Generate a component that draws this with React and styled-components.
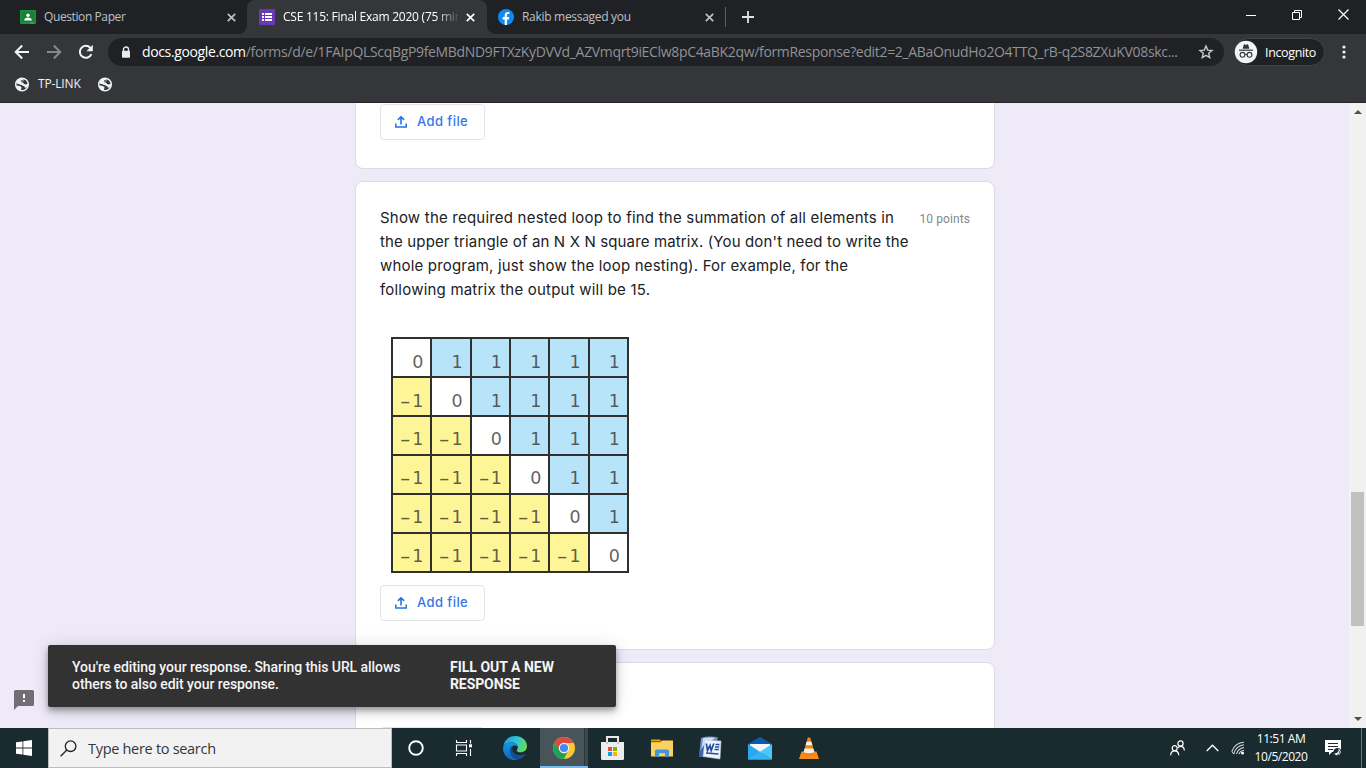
import React from "react";
import styled, { createGlobalStyle, css } from "styled-components";

const Global = createGlobalStyle`
  * { box-sizing: border-box; }
  html, body { margin: 0; padding: 0; overflow: hidden; }
  svg { display: block; flex: none; }
`;

const uiFont = `"Open Sans", "Noto Sans", sans-serif`;

const Screen = styled.div`
  width: 1366px;
  height: 768px;
  display: flex;
  flex-direction: column;
  overflow: hidden;
  font-family: ${uiFont};
`;

const Label = styled.span`
  white-space: nowrap;
  letter-spacing: ${(p) => p.$track || 0}px;
`;

/* ---------- browser chrome ---------- */

const TabStrip = styled.div`
  height: 34px;
  flex: none;
  display: flex;
  background: #202124;
`;

const Tab = styled.div`
  position: relative;
  width: ${(p) => p.$width}px;
  height: 34px;
  padding: 0 ${(p) => p.$end || 11}px 0 ${(p) => p.$inset}px;
  display: flex;
  align-items: center;
  gap: 8px;
  font-size: 12px;
  color: ${(p) => (p.$active ? "#ffffff" : "#bdc1c6")};
  ${(p) =>
    p.$active &&
    css`
      background: #35363a;
      border-radius: 8px 8px 0 0;
      &::before,
      &::after {
        content: "";
        position: absolute;
        bottom: 0;
        width: 8px;
        height: 8px;
      }
      &::before {
        left: -8px;
        background: radial-gradient(circle at 0 0, transparent 7.5px, #35363a 8px);
      }
      &::after {
        right: -8px;
        background: radial-gradient(circle at 100% 0, transparent 7.5px, #35363a 8px);
      }
    `}
`;

const TabTitle = styled.div`
  flex: 1;
  min-width: 0;
  white-space: nowrap;
  line-height: 20px;
  ${(p) => p.$fade && css`mask-image: linear-gradient(90deg, #000 87%, rgba(0, 0, 0, 0.1) 100%);`}
`;

const NewTab = styled.div`
  width: 44px;
  display: flex;
  align-items: center;
  padding-left: 16px;
  position: relative;
  &::before {
    content: "";
    position: absolute;
    left: -1px;
    top: 7px;
    width: 1px;
    height: 20px;
    background: #5a5c60;
  }
`;

const WindowControls = styled.div`
  margin-left: auto;
  display: flex;
  height: 29px;
`;

const WindowButton = styled.div`
  width: 46px;
  display: flex;
  align-items: center;
  justify-content: center;
`;

const Toolbar = styled.div`
  height: 36px;
  flex: none;
  display: flex;
  align-items: center;
  background: #35363a;
`;

const NavButtons = styled.div`
  width: 108px;
  padding-left: 14px;
  display: flex;
  gap: 16px;
`;

const Omnibox = styled.div`
  width: 1116px;
  height: 28px;
  border-radius: 14px;
  background: #202124;
  display: flex;
  align-items: center;
  padding: 0 10px 0 13px;
`;

const Url = styled.div`
  flex: 1;
  margin-left: 11px;
  font-size: 14px;
  line-height: 20px;
  color: #8f9297;
  white-space: nowrap;
`;

const Host = styled.span`
  color: #ffffff;
  letter-spacing: ${(p) => p.$track}px;
`;

const IncognitoChip = styled.div`
  margin: 0 2px 0 10px;
  width: 91px;
  height: 28px;
  border: 1px solid #414347;
  border-radius: 14px;
  background: #202124;
  display: flex;
  align-items: center;
  gap: 7px;
  font-size: 12.5px;
  color: #fff;
  svg {
    margin-left: -1px;
  }
`;

const MenuDots = styled.div`
  flex: 1;
  display: flex;
  justify-content: center;
  padding-right: 5px;
`;

const Bookmarks = styled.div`
  height: 33px;
  flex: none;
  padding: 0 0 4px 14px;
  display: flex;
  align-items: center;
  background: #35363a;
  border-bottom: 1px solid #242528;
  font-size: 12px;
  color: #f1f3f4;
`;

const BookmarkText = styled.div`
  width: 51px;
  margin: 0 8px 1px 8px;
`;

/* ---------- form page ---------- */

const Viewport = styled.div`
  position: relative;
  height: 625px;
  flex: none;
  display: flex;
  overflow: hidden;
  background: #eeeaf8;
`;

const FormColumn = styled.div`
  width: 1349px;
  height: 625px;
  display: flex;
  flex-direction: column;
  align-items: center;
  gap: 12px;
  padding-left: 1px;
`;

const Card = styled.div`
  width: 640px;
  flex: none;
  height: ${(p) => p.$height}px;
  padding: ${(p) => p.$top}px 24px 0;
  background: #fff;
  border: 1px solid #dadce0;
  ${(p) => p.$cut && css`border-top: 0;`}
  border-radius: ${(p) => (p.$cut ? "0 0 8px 8px" : "8px")};
`;

const AddFileButton = styled.div`
  width: 105px;
  height: 36px;
  border: 1px solid #e2e4e8;
  border-radius: 4px;
  display: flex;
  align-items: center;
  padding: 0 0 2px 14px;
  gap: 10px;
  font: 500 13px/20px Inter, "Open Sans", sans-serif;
  color: #3677e8;
`;

const QuestionHeader = styled.div`
  display: flex;
  justify-content: space-between;
`;

const QuestionText = styled.div`
  font: 400 15px/24px Inter, Lato, sans-serif;
  color: #202124;
`;

const QuestionLine = styled.div`
  white-space: nowrap;
  letter-spacing: ${(p) => p.$track}px;
`;

const Points = styled.div`
  font: 400 12px/16px Roboto, sans-serif;
  letter-spacing: 0.1px;
  color: #84888d;
  padding-top: 5px;
  white-space: nowrap;
`;

const Matrix = styled.div`
  width: 238px;
  height: 236px;
  margin: 35px 0 12px 11px;
  padding: 2px;
  display: grid;
  grid-template: repeat(6, 1fr) / repeat(6, 1fr);
  gap: 2px;
  background: #30302f;
`;

const cellColors = { 0: "#ffffff", 1: "#b8e4f9", "-1": "#fef597" };

const Cell = styled.div`
  background: ${(p) => cellColors[p.$value]};
  display: flex;
  align-items: center;
  justify-content: flex-end;
  gap: 4px;
  padding: ${(p) => 9 - p.$row * 0.6}px 7px 0 0;
  min-width: 0;
  font: 400 17.5px/20px "DejaVu Sans", sans-serif;
  color: rgba(45, 45, 45, 0.76);
`;

const Minus = styled.span`
  display: inline-block;
  transform: scaleX(1.75);
`;

const Toast = styled.div`
  position: absolute;
  left: 48px;
  top: 542px;
  width: 568px;
  height: 62px;
  border-radius: 2px;
  background: #323232;
  box-shadow: 0 6px 10px rgba(0, 0, 0, 0.14), 0 1px 18px rgba(0, 0, 0, 0.12), 0 3px 5px rgba(0, 0, 0, 0.25);
  display: flex;
  padding: 14px 24px 0;
  font: 500 14px/17px Roboto, sans-serif;
  color: #f4f4f4;
`;

const ToastMessage = styled.div`
  width: 378px;
`;

const ToastAction = styled.div`
  font-weight: 700;
`;

const Feedback = styled.div`
  position: absolute;
  left: 14px;
  top: 587px;
`;

const Scrollbar = styled.div`
  width: 17px;
  background: #f1f1f1;
  display: flex;
  flex-direction: column;
  align-items: center;
  justify-content: space-between;
  padding: 7px 0 7px;
`;

const Thumb = styled.div`
  width: 13px;
  height: 134px;
  margin-top: 286px;
  background: #c1c1c1;
`;

/* ---------- taskbar ---------- */

const Taskbar = styled.div`
  height: 40px;
  flex: none;
  display: flex;
  background: #1a2b30;
`;

const TaskButton = styled.div`
  width: ${(p) => p.$width || 49}px;
  margin-left: ${(p) => p.$gap || 0}px;
  display: flex;
  align-items: center;
  justify-content: center;
`;

const RunningButton = styled(TaskButton)`
  width: 48px;
  background: linear-gradient(90deg, #47555a 0 44px, #28383d 44px 45px, #3c4a4e 45px);
  border-bottom: 2px solid #76b9ed;
  padding-top: 2px;
`;

const SearchBox = styled.div`
  width: 344px;
  height: 40px;
  border: 1px solid #bcbcbc;
  background: #f2f2f2;
  display: flex;
  align-items: center;
  padding-left: 11px;
  gap: 11px;
  font-size: 14.5px;
  color: #33373a;
`;

const Tray = styled.div`
  margin-left: auto;
  display: flex;
  align-items: center;
`;

const TrayItem = styled.div`
  width: ${(p) => p.$width}px;
  margin-right: ${(p) => p.$after || 0}px;
  display: flex;
  justify-content: center;
`;

const Clock = styled.div`
  width: 66px;
  font-size: 12px;
  line-height: 18px;
  text-align: center;
  color: #fff;
`;

const ShowDesktop = styled.div`
  width: 5px;
  height: 40px;
  border-left: 1px solid #68757a;
`;

/* ---------- icons ---------- */

const CloseIcon = ({ color }) => (
  <svg width="9" height="9" viewBox="0 0 9 9">
    <path d="M.8.8l7.4 7.4M8.2.8L.8 8.2" stroke={color} strokeWidth="1.7" />
  </svg>
);

const ClassroomIcon = () => (
  <svg width="16" height="14" viewBox="0 0 16 14">
    <rect width="16" height="14" rx="1" fill="#1e8e3e" />
    <rect x="1.5" y="1.5" width="13" height="11" fill="#188038" />
    <circle cx="8" cy="5.2" r="1.7" fill="#fff" />
    <path d="M4.2 10.4c0-2 1.8-2.8 3.8-2.8s3.8.8 3.8 2.8z" fill="#fff" />
    <path d="M10 12.4h3.5v1H10z" fill="#57bb8a" />
  </svg>
);

const FormsIcon = () => (
  <svg width="16" height="16" viewBox="0 0 16 16">
    <rect width="16" height="16" rx="1" fill="#673ab7" />
    <path d="M3 4h2v2H3zM3 7h2v2H3zM3 10h2v2H3zM6 4h7v2H6zM6 7h7v2H6zM6 10h7v2H6z" fill="#fff" />
  </svg>
);

const FacebookIcon = () => (
  <svg width="16" height="16" viewBox="0 0 16 16">
    <circle cx="8" cy="8" r="8" fill="#0d8bf0" />
    <path d="M6.7 16v-5.6H4.6V8h2.1V6.2c0-2.1 1.2-3.3 3.1-3.3.7 0 1.5.1 1.5.1v2.1h-1.1c-1 0-1.3.6-1.3 1.3V8h2.3l-.4 2.4H8.9V16z" fill="#fff" />
  </svg>
);

const PlusIcon = () => (
  <svg width="12" height="12" viewBox="0 0 12 12">
    <path d="M6 0v12M0 6h12" stroke="#dfe1e5" strokeWidth="1.8" />
  </svg>
);

const BackIcon = ({ color, flip }) => (
  <svg width="16" height="16" viewBox="0 0 16 16">
    <path
      d="M15 8H2M8.2 1.5L1.7 8l6.5 6.5"
      fill="none"
      stroke={color}
      strokeWidth="2"
      transform={flip ? "matrix(-1 0 0 1 16 0)" : undefined}
    />
  </svg>
);

const ReloadIcon = () => (
  <svg width="16" height="16" viewBox="0 0 16 16">
    <path d="M13.4 10.1A6 6 0 1 1 12.3 3.8L13.6 5" fill="none" stroke="#f1f3f4" strokeWidth="2" />
    <path d="M14.8.8v6.4H8.4z" fill="#f1f3f4" />
  </svg>
);

const LockIcon = () => (
  <svg width="10" height="13" viewBox="0 0 10 13">
    <path d="M2.5 5V3.3a2.5 2.3 0 0 1 5 0V5" fill="none" stroke="#e8eaed" strokeWidth="1.4" />
    <rect x="1" y="4.7" width="8" height="7" rx=".8" fill="#e8eaed" />
  </svg>
);

const StarIcon = () => (
  <svg width="16" height="16" viewBox="0 0 16 16">
    <path d="M8 2.1l1.7 4 4.3.4-3.3 2.8 1 4.2L8 11.3l-3.7 2.2 1-4.2L2 6.5l4.3-.4z" fill="none" stroke="#c9ccd0" strokeWidth="1.4" />
  </svg>
);

const IncognitoIcon = () => (
  <svg width="24" height="24" viewBox="0 0 24 24">
    <circle cx="12" cy="12" r="11.2" fill="#f1f3f4" />
    <path d="M8.6 8.8l1.2-4.1c.2-.4.6-.4 1-.2 1 .4 1.5.4 2.4 0 .4-.2.8-.2 1 .2l1.2 4.1z" fill="#35363a" />
    <path d="M5 10.2h14" stroke="#35363a" strokeWidth="1.2" />
    <circle cx="8.5" cy="14.8" r="2.4" fill="none" stroke="#35363a" strokeWidth="1.1" />
    <circle cx="15.5" cy="14.8" r="2.4" fill="none" stroke="#35363a" strokeWidth="1.1" />
    <path d="M10.8 14.6q1.2-.8 2.4 0" fill="none" stroke="#35363a" />
  </svg>
);

const GlobeIcon = () => (
  <svg width="16" height="15" viewBox="-.5 0 16 15">
    <circle cx="7.5" cy="7.5" r="6.300" fill="none" stroke="#f1f3f4" strokeWidth="1.500" />
    <path d="M1.500 8.500c1.500-.3 2.600 0 3.500.6 1 .6 1.700.4 2 1.400.2 1-.8 1.200-.6 3.200A6.500 6.500 0 0 1 1.500 8.500z" fill="#f1f3f4" />
    <path d="M2 4.500C3.500 1.800 6 1 8.500 1.200l.3 1.300c-1 .8-2.300.5-2.500 1.700-.1 1 .6 1.100 1.700 1.200 1.300.1 1.200 1.700 2.200 1.900 1.200.3 2-.4 3.400-.1-.1 1.300-.5 2.400-1 3.200-1.800-.2-2.500-.9-3.500-1.500-1-.5-1.800-.3-2.700-1C5.500 7.200 4.500 7 3.500 6.900 2.500 6.800 1.800 6.300 2 4.500z" fill="#f1f3f4" />
    <path d="M9 2.500c.2 1.400-.8 2-2.300 2.200M10 10.500c1 .3 1.800.1 2.400.3" fill="none" stroke="#f1f3f4" strokeWidth=".6" />
  </svg>
);

const UploadIcon = () => (
  <svg width="12" height="13" viewBox="0 0 12 13">
    <path d="M.8 8.500V12h10.400V8.500" fill="none" stroke="#1f73e8" strokeWidth="1.500" />
    <path d="M6 9.600V2M2.900 4.900L6 1.800l3.100 3.100" fill="none" stroke="#1f73e8" strokeWidth="1.600" />
  </svg>
);

const FeedbackIcon = () => (
  <svg width="20" height="20" viewBox="0 0 20 20">
    <path d="M1.5 0h17A1.5 1.5 0 0 1 20 1.5v13a1.5 1.5 0 0 1-1.5 1.5H4l-4 4V1.5A1.5 1.5 0 0 1 1.5 0z" fill="#716d77" />
    <path d="M9 4h2v4.2H9zM9 10h2v2H9z" fill="#fff" />
  </svg>
);

const ArrowIcon = ({ down }) => (
  <svg width="8" height="4" viewBox="0 0 8 4">
    <path d={down ? "M0 0h8L4 4z" : "M0 4h8L4 0z"} fill="#505050" />
  </svg>
);

const WindowsIcon = () => (
  <svg width="16" height="16" viewBox="0 0 16 16">
    <path d="M0 2.3l6.5-.9v6.1H0zM7.3 1.3L16 0v7.5H7.3zM0 8.4h6.5v6.2L0 13.7zM7.3 8.4H16V16l-8.7-1.3z" fill="#fff" />
  </svg>
);

const SearchIcon = () => (
  <svg width="17" height="17" viewBox="0 0 17 17">
    <circle cx="10.6" cy="6.2" r="5.3" fill="none" stroke="#222" strokeWidth="1.3" />
    <path d="M6.8 10L.6 16.2" stroke="#222" strokeWidth="1.3" />
  </svg>
);

const TaskViewIcon = () => (
  <svg width="18" height="16" viewBox="0 0 18 16" fill="none" stroke="#fff" strokeWidth="1.1">
    <path d="M1.5 0v2.5h10V0M1.5 16v-2.5h10V16M1.5 5h10v6h-10zM15.5 0v3.5M15.5 9v7" />
    <path d="M14 4.3h3v3h-3z" fill="#fff" stroke="none" />
  </svg>
);

const EdgeIcon = () => (
  <svg width="24" height="24" viewBox="0 0 24 24">
    <defs>
      <linearGradient id="edgeTop" x1="0" y1=".3" x2="1" y2=".6">
        <stop offset="0" stopColor="#1b9de2" />
        <stop offset=".5" stopColor="#33c3d8" />
        <stop offset="1" stopColor="#68dc50" />
      </linearGradient>
      <linearGradient id="edgeSide" x1="0" y1="0" x2="0" y2="1">
        <stop offset="0" stopColor="#1598e2" />
        <stop offset="1" stopColor="#0c67c2" />
      </linearGradient>
    </defs>
    <path d="M.3 10.5C1.2 4.4 6 0 12 0c7 0 12 4.8 12 10.2 0 3.8-2.8 6-6.3 6-2.4 0-4-.8-4-1.8 0-.8 1.2-1.2 1.2-3.3 0-2.6-2.8-4.6-6.2-4.6C4.5 6.500 1.500 8 .3 10.500z" fill="url(#edgeTop)" />
    <path d="M0 12.200C.5 8.500 4 6.500 8.300 6.500c3.600 0 6.400 1.900 6.600 4.400-1-1-2-1.500-3.200-1.500-2.700 0-4.700 2.600-4.300 6 .5 4 3.600 6.900 7.400 8.200C7 26 0 20 0 12.200z" fill="url(#edgeSide)" />
    <path d="M9.700 10c-2.400 1-3.300 3.500-2.700 6.500.8 4 4.300 6.900 8 7.100 3.300-.8 6-2.700 7.500-5.200.3-.5-.1-.8-.6-.5-5.800 2.900-12.200.2-12.600-4.500-.1-1.300.1-2.300.4-3.400z" fill="#0e4f95" />
  </svg>
);

const ChromeIcon = () => (
  <svg width="22" height="22" viewBox="0 0 22 22">
    <circle cx="11" cy="11" r="11" fill="#fbc934" />
    <path d="M1.500 5.500A11 11 0 0 1 20.500 5.500L20.600 6H11L6.700 13.500z" fill="#dd4b3e" />
    <path d="M1.500 5.500A11 11 0 0 0 10.800 22l4.600-8.500H6.700z" fill="#1fa05a" />
    <circle cx="11" cy="11" r="5.200" fill="#f5f5f5" />
    <circle cx="11" cy="11" r="4.100" fill="#4a89f3" />
  </svg>
);

const StoreIcon = () => (
  <svg width="23" height="24" viewBox="0 0 23 24">
    <path d="M6 7V1h11v6" fill="none" stroke="#e8e8e8" strokeWidth="2" />
    <path d="M0 6h23v16.500a1.500 1.500 0 0 1-1.500 1.500h-20A1.500 1.500 0 0 1 0 22.500z" fill="#ededed" />
    <path d="M5 6h2v2H5zM16 6h2v2h-2z" fill="#c9c9c9" />
    <path d="M7 11h4v4H7z" fill="#e8502c" />
    <path d="M12 11h4v4h-4z" fill="#7db700" />
    <path d="M7 16h4v4H7z" fill="#0aa2ee" />
    <path d="M12 16h4v4h-4z" fill="#fdb400" />
  </svg>
);

const FolderIcon = () => (
  <svg width="22" height="18" viewBox="0 0 22 18">
    <path d="M0 .5h9l1.500 2H0z" fill="#e6a316" />
    <path d="M0 3h9.500l1.500-1.500h11v16H0z" fill="#fbd262" />
    <path d="M0 3h9.500v1H0z" fill="#f3b62b" />
    <path d="M4 17.800V12a1.500 1.500 0 0 1 1.500-1.500h11A1.500 1.500 0 0 1 18 12v5.800h-4v-3.600H8v3.600z" fill="#3f97d8" />
  </svg>
);

const WordIcon = () => (
  <svg width="24" height="24" viewBox="0 0 24 24">
    <path d="M3 2Q11-.5 20 1.500l-1 3H8L6 21l-5-.5z" fill="#7392c8" />
    <path d="M5 2.200q6-1.400 12-.4L6 11l-3 8z" fill="#d5e0f5" />
    <path d="M1 17l5-8v12l-5-.5z" fill="#3f62ab" />
    <path d="M7 4l16 1-1 18L5 20.500z" fill="#eef3fb" stroke="#b6c6e4" strokeWidth=".6" />
    <path d="M8.300 7.500l1.200 7 2.500-5 1.200 5 2.600-7" fill="none" stroke="#234f9e" strokeWidth="1.700" />
    <path d="M17.500 8.500h4M17 11h4.300M16.500 13.500h4.500M8 17l12.500 1" stroke="#234f9e" strokeWidth="1.300" />
  </svg>
);

const MailIcon = () => (
  <svg width="24" height="23" viewBox="0 0 24 23">
    <path d="M0 7L12 0l12 7v4H0z" fill="#0b5cad" />
    <path d="M2 7h20v5l-8 5-12-7z" fill="#f4f6f8" />
    <path d="M0 7l13 8.500L24 22.500H0z" fill="#2aa9ee" />
    <path d="M12 14.700L24 7v15.500z" fill="#4cc7fb" />
    <path d="M0 22.500L12 14.700l12 7.800z" fill="#35b3f3" />
  </svg>
);

const VlcIcon = () => (
  <svg width="20" height="22" viewBox="0 0 20 22">
    <path d="M2.500 14.500h15L20 22H0z" fill="#f28c1a" />
    <path d="M8.800.5h2.400L16 17.200q-6 3-12 0z" fill="#f08314" />
    <path d="M7.600 4.800h4.800l1 3.400H6.600zM5.600 11.500h8.800l1 3.700q-5.400 2.300-10.800 0z" fill="#f3f0eb" />
  </svg>
);

const PeopleIcon = () => (
  <svg width="15" height="16" viewBox="0 0 15 16" fill="none" stroke="#fff" strokeWidth="1.200">
    <circle cx="10.500" cy="3.500" r="2.600" />
    <circle cx="4.700" cy="8.200" r="2.500" />
    <path d="M.7 15.300c0-2.800 1.600-4.500 4-4.500s4 1.700 4 4.500M8 7.800c.7-1 1.500-1.500 2.600-1.500 2.300 0 3.700 1.600 3.700 4.200" />
  </svg>
);

const ChevronIcon = () => (
  <svg width="13" height="8" viewBox="0 0 13 8">
    <path d="M.7 7l5.800-5.800L12.300 7" fill="none" stroke="#fff" strokeWidth="1.300" />
  </svg>
);

const WifiIcon = () => (
  <svg width="14" height="14" viewBox="0 0 14 14" fill="none" stroke="#d5dadc" strokeWidth="1.100">
    <path d="M2.800 13A12 12 0 0 1 13 3.800M5.500 13A9 9 0 0 1 13 6.500M8 13A6 6 0 0 1 13 9.200" />
    <path d="M.8 10.500A14 14 0 0 1 13 1.200M.8 10.500L3 13" />
    <circle cx="11.500" cy="12" r="1.500" fill="#fff" stroke="none" />
  </svg>
);

const NotificationIcon = () => (
  <svg width="17" height="17" viewBox="0 0 17 17">
    <path d="M0 0h16v12H7l-3 3v-3H0z" fill="#fff" />
    <path d="M3 3.500h10M3 6.500h10M3 9.500h5" stroke="#1a2b30" strokeWidth="1" />
    <circle cx="12.500" cy="12.300" r="4.200" fill="#1a2b30" />
    <path d="M13.500 8.800a3.400 3.400 0 1 1-4.300 4.700c2.700.3 4.800-1.700 4.300-4.700z" fill="#fff" />
    <path d="M14 10.500a3 3 0 0 1-2 4.500" stroke="#1a2b30" fill="none" strokeWidth=".8" />
  </svg>
);

const AddFile = () => (
  <AddFileButton>
    <UploadIcon />
    <Label $track={0.42}>Add file</Label>
  </AddFileButton>
);

const questionLines = [
  ["Show the required nested loop to find the summation of all elements in", 0.21],
  ["the upper triangle of an N X N square matrix. (You don't need to write the", 0.14],
  ["whole program, just show the loop nesting). For example, for the", 0.18],
  ["following matrix the output will be 15.", 0.21],
];

const size = 6;
const matrix = Array.from({ length: size * size }, (_, i) => {
  const row = Math.floor(i / size);
  return { row, value: Math.sign((i % size) - row) };
});

export default function App() {
  return (
    <Screen>
      <Global />
      <TabStrip>
        <Tab $width={247} $inset={20}>
          <ClassroomIcon />
          <TabTitle><Label $track={-0.4}>Question Paper</Label></TabTitle>
          <CloseIcon color="#bdc1c6" />
        </Tab>
        <Tab $active $width={240} $inset={12} $end={12}>
          <FormsIcon />
          <TabTitle $fade><Label $track={-0.24}>CSE 115: Final Exam 2020 (75 min</Label></TabTitle>
          <CloseIcon color="#ffffff" />
        </Tab>
        <Tab $width={239} $inset={11} $end={12}>
          <FacebookIcon />
          <TabTitle><Label $track={-0.3}>Rakib messaged you</Label></TabTitle>
          <CloseIcon color="#bdc1c6" />
        </Tab>
        <NewTab><PlusIcon /></NewTab>
        <WindowControls>
          <WindowButton>
            <svg width="10" height="10" viewBox="0 0 10 10"><path d="M0 5.500h10" stroke="#fff" /></svg>
          </WindowButton>
          <WindowButton>
            <svg width="10" height="10" viewBox="0 0 10 10" fill="none" stroke="#fff">
              <path d="M.5 2.500h7v7h-7zM2.500 2.500v-2h7v7h-2" />
            </svg>
          </WindowButton>
          <WindowButton>
            <svg width="11" height="11" viewBox="0 0 11 11"><path d="M.5.5l10 10M10.500.5l-10 10" stroke="#fff" strokeWidth="1.200" /></svg>
          </WindowButton>
        </WindowControls>
      </TabStrip>

      <Toolbar>
        <NavButtons>
          <BackIcon color="#f1f3f4" />
          <BackIcon color="#85878a" flip />
          <ReloadIcon />
        </NavButtons>
        <Omnibox>
          <LockIcon />
          <Url>
            <Host $track={-0.37}>docs.google.com</Host>
            <Label $track={-0.33}>
              /forms/d/e/1FAIpQLScqBgP9feMBdND9FTXzKyDVVd_AZVmqrt9iEClw8pC4aBK2qw/formResponse?edit2=2_ABaOnudHo2O4TTQ_rB-q2S8ZXuKV08skc...
            </Label>
          </Url>
          <StarIcon />
        </Omnibox>
        <IncognitoChip>
          <IncognitoIcon />
          <Label $track={-0.36}>Incognito</Label>
        </IncognitoChip>
        <MenuDots>
          <svg width="4" height="14" viewBox="0 0 4 14" fill="#f1f3f4">
            <circle cx="2" cy="2" r="1.600" /><circle cx="2" cy="7" r="1.600" /><circle cx="2" cy="12" r="1.600" />
          </svg>
        </MenuDots>
      </Toolbar>

      <Bookmarks>
        <GlobeIcon />
        <BookmarkText><Label $track={-0.15}>TP-LINK</Label></BookmarkText>
        <GlobeIcon />
      </Bookmarks>

      <Viewport>
        <FormColumn>
          <Card $cut $height={66} $top={1}><AddFile /></Card>
          <Card $height={469} $top={24}>
            <QuestionHeader>
              <QuestionText>
                {questionLines.map(([text, track]) => (
                  <QuestionLine key={text} $track={track}>{text}</QuestionLine>
                ))}
              </QuestionText>
              <Points>10 points</Points>
            </QuestionHeader>
            <Matrix>
              {matrix.map(({ row, value }, i) => (
                <Cell key={i} $value={value} $row={row}>
                  {value < 0 && <Minus>-</Minus>}
                  <span>{Math.abs(value)}</span>
                </Cell>
              ))}
            </Matrix>
            <AddFile />
          </Card>
          <Card $height={140} $top={64}><AddFileButton /></Card>
        </FormColumn>
        <Scrollbar>
          <ArrowIcon />
          <Thumb />
          <ArrowIcon down />
        </Scrollbar>
        <Feedback><FeedbackIcon /></Feedback>
        <Toast>
          <ToastMessage>
            <Label $track={-0.068}>You're editing your response. Sharing this URL allows</Label><br />
            <Label $track={-0.06}>others to also edit your response.</Label>
          </ToastMessage>
          <ToastAction>
            <Label>FILL OUT A NEW</Label><br />
            <Label $track={-0.1}>RESPONSE</Label>
          </ToastAction>
        </Toast>
      </Viewport>

      <Taskbar>
        <TaskButton $width={48}><WindowsIcon /></TaskButton>
        <SearchBox>
          <SearchIcon />
          <Label $track={-0.3}>Type here to search</Label>
        </SearchBox>
        <TaskButton $width={48}>
          <svg width="16" height="16" viewBox="0 0 16 16"><circle cx="8" cy="8" r="6.800" fill="none" stroke="#fff" strokeWidth="1.900" /></svg>
        </TaskButton>
        <TaskButton $width={48}><TaskViewIcon /></TaskButton>
        <TaskButton $gap={2} $width={50}><EdgeIcon /></TaskButton>
        <RunningButton><ChromeIcon /></RunningButton>
        <TaskButton><StoreIcon /></TaskButton>
        <TaskButton><FolderIcon /></TaskButton>
        <TaskButton $width={48}><WordIcon /></TaskButton>
        <TaskButton $width={52}><MailIcon /></TaskButton>
        <TaskButton $width={46}><VlcIcon /></TaskButton>
        <Tray>
          <TrayItem $width={38}><PeopleIcon /></TrayItem>
          <TrayItem $width={32}><ChevronIcon /></TrayItem>
          <TrayItem $width={20}><WifiIcon /></TrayItem>
          <Clock>
            <Label $track={-0.45}>11:51 AM</Label><br />
            <Label $track={-0.45}>10/5/2020</Label>
          </Clock>
          <TrayItem $width={38} $after={9}><NotificationIcon /></TrayItem>
          <ShowDesktop />
        </Tray>
      </Taskbar>
    </Screen>
  );
}
